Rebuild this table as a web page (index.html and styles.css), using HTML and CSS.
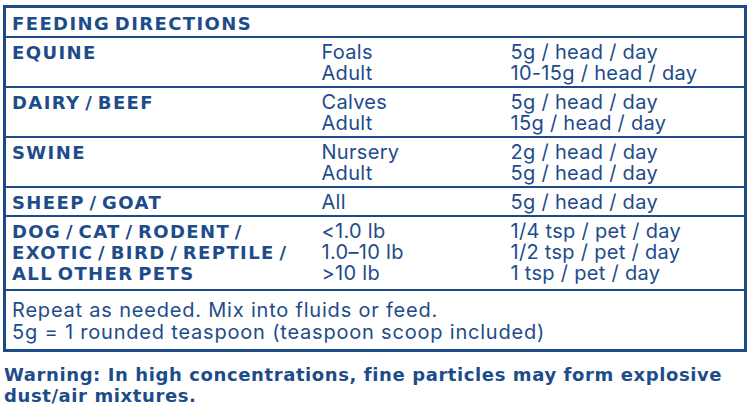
FILE: index.html
```html
<!DOCTYPE html>
<html>
<head>
<meta charset="utf-8">
<link rel="stylesheet" href="styles.css">
</head>
<body>
<div class="page">
  <table class="feed">
    <colgroup>
      <col class="c1">
      <col class="c2">
      <col class="c3">
    </colgroup>
    <tr class="head"><td colspan="3" class="b">FEEDING DIRECTIONS</td></tr>
    <tr class="r2">
      <td class="b">EQUINE</td>
      <td>Foals<br>Adult</td>
      <td>5g / head / day<br>10-15g / head / day</td>
    </tr>
    <tr class="r2">
      <td class="b">DAIRY / BEEF</td>
      <td>Calves<br>Adult</td>
      <td>5g / head / day<br>15g / head / day</td>
    </tr>
    <tr class="r2">
      <td class="b">SWINE</td>
      <td>Nursery<br>Adult</td>
      <td>2g / head / day<br>5g / head / day</td>
    </tr>
    <tr class="r1">
      <td class="b">SHEEP / GOAT</td>
      <td>All</td>
      <td>5g / head / day</td>
    </tr>
    <tr class="r3">
      <td class="b">DOG / CAT / RODENT /<br>EXOTIC / BIRD / REPTILE /<br>ALL OTHER PETS</td>
      <td>&lt;1.0 lb<br>1.0–10 lb<br>&gt;10 lb</td>
      <td>1/4 tsp / pet / day<br>1/2 tsp / pet / day<br>1 tsp / pet / day</td>
    </tr>
    <tr class="notes">
      <td colspan="3">Repeat as needed. Mix into fluids or feed.<br>5g = 1 rounded teaspoon (teaspoon scoop included)</td>
    </tr>
  </table>
  <p class="warn">Warning: In high concentrations, fine particles may form explosive<br>dust/air mixtures.</p>
</div>
</body>
</html>
```
FILE: styles.css
```css
html, body {
  margin: 0;
  padding: 0;
  background: #ffffff;
}
.page {
  width: 750px;
  height: 409px;
  padding: 5px 3px 0 3px;
  box-sizing: border-box;
  font-family: Inter, "Liberation Sans", sans-serif;
  color: #1d4c8b;
}
.feed {
  width: 744px;
  border-collapse: collapse;
  border: 3px solid #1b4a86;
  font-size: 20px;
  line-height: 21px;
  letter-spacing: 0.3px;
  table-layout: fixed;
}
.c1 { width: 311px; }
.c2 { width: 189px; }
.feed td {
  border-top: 2px solid #1b4a86;
  border-bottom: 2px solid #1b4a86;
  padding: 0 0 0 6px;
  vertical-align: top;
  white-space: nowrap;
  box-sizing: border-box;
}
.b {
  font-family: "DejaVu Sans", sans-serif;
  font-weight: 700;
  font-size: 18px;
  letter-spacing: 1.4px;
  word-spacing: -3px;
}
.head td { height: 30px; padding-top: 5px; }
.r2 td { height: 50px; padding-top: 4px; }
.r1 td { height: 29px; padding-top: 4px; }
.r3 td { height: 74px; padding-top: 4px; }
.notes td {
  height: 61px;
  padding-top: 8px;
  line-height: 22px;
  letter-spacing: 0.8px;
}
.warn {
  margin: 12px 0 0 1px;
  font-family: "DejaVu Sans", sans-serif;
  font-weight: 700;
  font-size: 18px;
  line-height: 21px;
  letter-spacing: 0.6px;
  white-space: nowrap;
}
```
